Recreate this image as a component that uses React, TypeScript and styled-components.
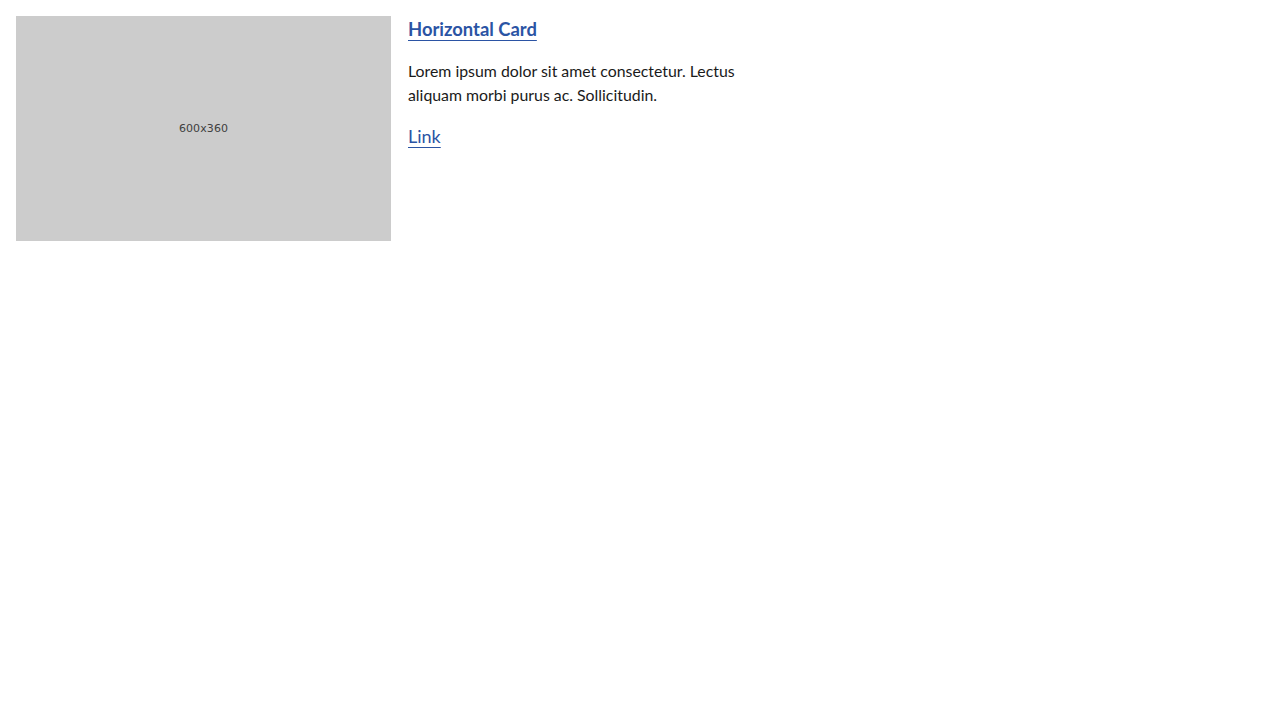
import React from "react";
import styled, { createGlobalStyle } from "styled-components";

const Global = createGlobalStyle`
  html, body { margin: 0; padding: 0; background: #fff; }
  body { font-family: Lato, "Noto Sans", sans-serif; color: #111; }
`;

const Page = styled.div`
  padding: 16px;
`;

const Card = styled.article`
  display: grid;
  grid-template-columns: 375px 375px;
  gap: 17px;
  align-items: start;
`;

const Placeholder = styled.div`
  width: 375px;
  height: 225px;
  background: #cccccc;
  display: flex;
  align-items: center;
  justify-content: center;
  font-family: "DejaVu Sans", sans-serif;
  font-size: 11px;
  color: #404040;
  letter-spacing: 0.1px;
`;

const Body = styled.div`
  display: flex;
  flex-direction: column;
`;

const Title = styled.h2`
  margin: 0;
  font-size: 18.4px;
  font-weight: 700;
  line-height: 26px;
`;

const TextLink = styled.a<{ $weight?: number }>`
  color: #2b54a4;
  text-decoration: underline;
  text-decoration-thickness: 1px;
  text-underline-offset: 4px;
  font-weight: ${(p) => p.$weight ?? 700};
`;

const Text = styled.p`
  margin: 17px 0 0;
  font-size: 15.85px;
  font-weight: 400;
  line-height: 24px;
  color: #1a1a1a;
`;

const Footer = styled.div`
  margin-top: 15px;
  font-size: 18px;
  line-height: 28px;
`;

export default function App() {
  return (
    <>
      <Global />
      <Page>
        <Card>
          <Placeholder>600x360</Placeholder>
          <Body>
            <Title>
              <TextLink href="#">Horizontal Card</TextLink>
            </Title>
            <Text>
              Lorem ipsum dolor sit amet consectetur. Lectus aliquam morbi purus ac. Sollicitudin.
            </Text>
            <Footer>
              <TextLink href="#" $weight={400}>Link</TextLink>
            </Footer>
          </Body>
        </Card>
      </Page>
    </>
  );
}
